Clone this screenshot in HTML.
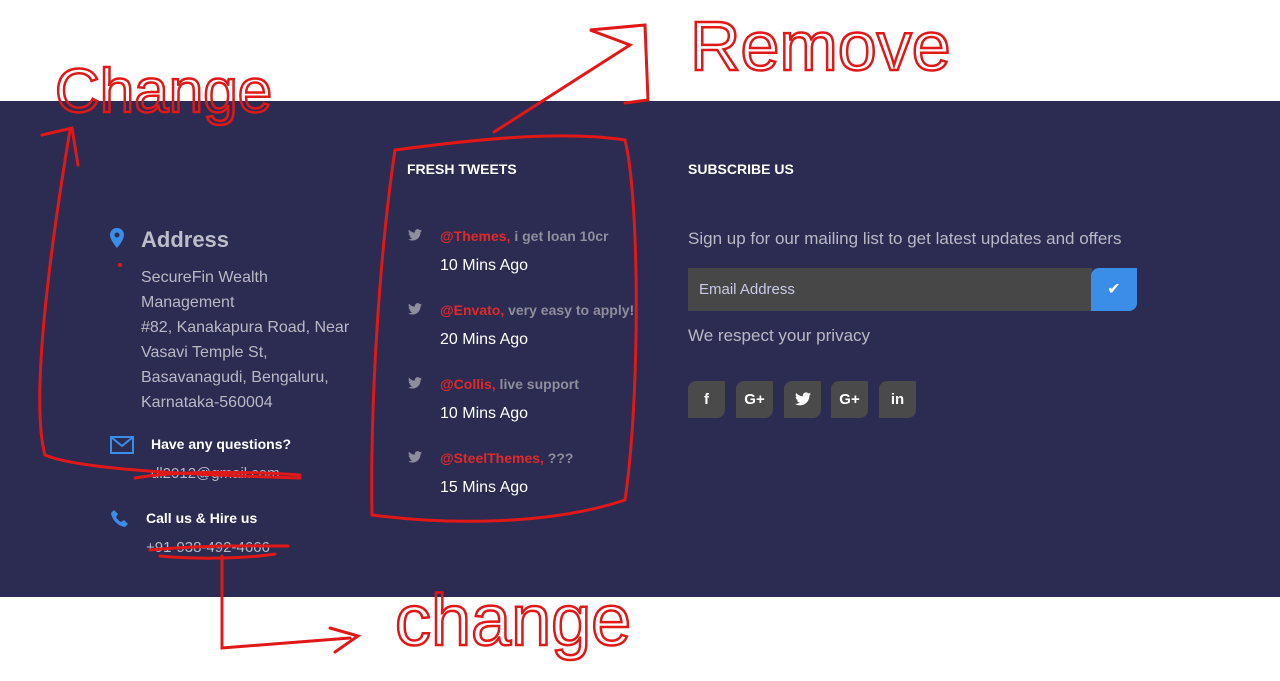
<!DOCTYPE html>
<html><head><meta charset="utf-8"><style>
*{margin:0;padding:0;box-sizing:border-box}
body{width:1280px;height:681px;background:#fff;position:relative;overflow:hidden;font-family:"Liberation Sans",sans-serif}
.f{position:absolute;left:0;top:101px;width:1280px;height:496px;background:#2c2b51}
.a{position:absolute;white-space:nowrap}
.h{color:#fff;font-weight:bold;font-size:14px}
.g{color:#b9b9c6;font-size:16px}
.tw{color:#8e8e9e;font-size:14px;font-weight:bold}
.tw b{color:#e02a2a}
.tm{color:#fff;font-size:16px}
.s{position:absolute;top:381px;width:37px;height:37px;background:#4a4a4a;border-radius:8px 0 8px 0;color:#fff;font-weight:bold;font-size:15px;text-align:center;line-height:37px}
.s svg{margin-top:11px}
</style></head><body>
<svg width="0" height="0" style="position:absolute"><defs><symbol id="b" viewBox="0 0 24 20"><path d="M24 2.4c-.9.4-1.8.7-2.8.8 1-.6 1.8-1.6 2.2-2.7-1 .6-2 1-3.1 1.2C19.3.7 18 0 16.6 0c-2.7 0-4.9 2.2-4.9 4.9 0 .4 0 .8.1 1.1C7.7 5.8 4.1 3.9 1.7.9c-.4.7-.7 1.6-.7 2.5 0 1.7.9 3.2 2.2 4.1-.8 0-1.6-.2-2.2-.6v.1c0 2.4 1.7 4.4 3.9 4.8-.4.1-.8.2-1.3.2-.3 0-.6 0-.9-.1.6 2 2.4 3.4 4.6 3.4-1.7 1.3-3.8 2.1-6.1 2.1-.4 0-.8 0-1.2-.1 2.2 1.4 4.8 2.2 7.5 2.2 9.1 0 14-7.5 14-14v-.6c1-.7 1.8-1.6 2.5-2.5z"/></symbol></defs></svg>
<div class="f"></div>
<svg class="a" style="left:110px;top:228px" width="14" height="20" viewBox="0 0 14 20"><path d="M7 0C3 0 0 3 0 7c0 5 7 13 7 13s7-8 7-13c0-4-3-7-7-7z" fill="#3a8ee8"/><circle cx="7" cy="7" r="2.5" fill="#2c2b51"/></svg>
<div class="a" style="left:141px;top:227px;color:#bdbdc8;font-size:22px;font-weight:bold">Address</div>
<div class="a g" style="left:141px;top:265px;line-height:25px">SecureFin Wealth<br>Management<br>#82, Kanakapura Road, Near<br>Vasavi Temple St,<br>Basavanagudi, Bengaluru,<br>Karnataka-560004</div>
<svg class="a" style="left:110px;top:436px" width="24" height="18"><rect x="1" y="1" width="22" height="16" fill="none" stroke="#3a8ee8" stroke-width="2"/><path d="M1 1l11 9 11-9" fill="none" stroke="#3a8ee8" stroke-width="2"/></svg>
<div class="a h" style="left:151px;top:436px">Have any questions?</div>
<div class="a g" style="left:151px;top:465px;font-size:15px">dl2012@gmail.com</div>
<svg class="a" style="left:111px;top:509px" width="18" height="18" viewBox="0 0 18 18"><path d="M3 1l4 4-2 3c1 2 3 4 5 5l3-2 4 4-3 3C7 17 1 11 0 4z" fill="#3a8ee8"/></svg>
<div class="a h" style="left:146px;top:510px">Call us &amp; Hire us</div>
<div class="a g" style="left:146px;top:539px;font-size:15px">+91-938-492-4666</div>
<div class="a h" style="left:407px;top:161px">FRESH TWEETS</div>
<div class="a h" style="left:688px;top:161px">SUBSCRIBE US</div>
<svg class="a" style="left:408px;top:229px" width="14" height="12" fill="#8e8e9e"><use href="#b"/></svg>
<svg class="a" style="left:408px;top:303px" width="14" height="12" fill="#8e8e9e"><use href="#b"/></svg>
<svg class="a" style="left:408px;top:377px" width="14" height="12" fill="#8e8e9e"><use href="#b"/></svg>
<svg class="a" style="left:408px;top:451px" width="14" height="12" fill="#8e8e9e"><use href="#b"/></svg>
<div class="a tw" style="left:440px;top:228px"><b>@Themes,</b> i get loan 10cr</div>
<div class="a tm" style="left:440px;top:257px">10 Mins Ago</div>
<div class="a tw" style="left:440px;top:302px"><b>@Envato,</b> very easy to apply!</div>
<div class="a tm" style="left:440px;top:331px">20 Mins Ago</div>
<div class="a tw" style="left:440px;top:376px"><b>@Collis,</b> live support</div>
<div class="a tm" style="left:440px;top:405px">10 Mins Ago</div>
<div class="a tw" style="left:440px;top:450px"><b>@SteelThemes,</b> ???</div>
<div class="a tm" style="left:440px;top:479px">15 Mins Ago</div>
<div class="a g" style="left:688px;top:229px;font-size:17px">Sign up for our mailing list to get latest updates and offers</div>
<div class="a" style="left:688px;top:268px;width:404px;height:43px;background:#474747;color:#c8c8e8;font-size:15px;line-height:43px;padding-left:11px">Email Address</div>
<div class="a" style="left:1091px;top:268px;width:46px;height:43px;background:#3a8ee8;border-radius:8px 0 8px 0;color:#fff;text-align:center;line-height:43px;font-size:16px">✔</div>
<div class="a g" style="left:688px;top:326px;font-size:17px">We respect your privacy</div>
<div class="s" style="left:688px">f</div><div class="s" style="left:736px">G+</div><div class="s" style="left:784px"><svg width="16" height="14" fill="#fff"><use href="#b"/></svg></div><div class="s" style="left:831px">G+</div><div class="s" style="left:879px">in</div>
<svg class="a" style="left:0;top:0" width="1280" height="681">
<g fill="none" stroke="#e01818" stroke-width="3" stroke-linecap="round">
<text x="55" y="112" font-size="62" font-family="Liberation Sans" stroke-width="2.5" fill="none">Change</text>
<text x="690" y="70" font-size="70" font-family="Liberation Sans" stroke-width="2.5" fill="none">Remove</text>
<text x="395" y="645" font-size="72" font-family="Liberation Sans" stroke-width="2.5" fill="none">change</text>
<path d="M42 135 L72 128 L78 165"/>
<path d="M70 130 C50 250 30 400 45 455 C80 470 200 475 300 478"/>
<path d="M135 478 C180 470 260 472 300 475"/>
<path d="M150 550 C200 545 250 546 288 546"/>
<path d="M160 556 C200 560 250 558 275 554"/>
<path d="M222 556 L222 648 L350 638"/>
<path d="M330 628 L358 636 L335 652"/>
<path d="M494 132 L630 45 L590 30 L645 25 L648 100 L625 103"/>
<path d="M395 150 C380 250 370 400 372 515 C450 525 550 525 625 500 C640 400 640 200 625 140 C560 130 470 140 395 150"/>
</g>
<circle cx="120" cy="265" r="2" fill="#e01818"/>
</svg>
</body></html>
